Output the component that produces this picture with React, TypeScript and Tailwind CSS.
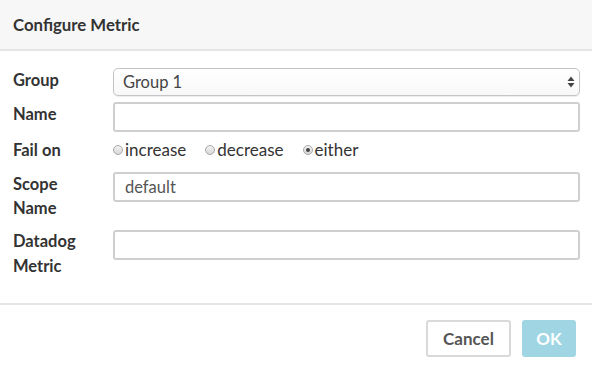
function Radio({ label, checked }: { label: string; checked?: boolean }) {
	return (
		<label className="flex items-center">
			<span className="w-[10px] h-[10px] rounded-full border border-[#a8a8a8] bg-gradient-to-b from-[#f4f4f4] to-[#d6d6d6] flex items-center justify-center mr-[2px]">
				{checked && <span className="w-[4px] h-[4px] rounded-full bg-[#444]" />}
			</span>
			<span>{label}</span>
		</label>
	);
}

function Field({ label, children }: { label: React.ReactNode; children: React.ReactNode }) {
	return (
		<div className="flex items-start">
			<div className="w-[100px] font-bold text-[#333] leading-[24px] text-[16.5px]">{label}</div>
			<div className="flex-1">{children}</div>
		</div>
	);
}

export default function App() {
	return (
		<div
			className="w-[592px] h-[366px] bg-white text-[16.5px] text-[#333] flex flex-col"
			style={{ fontFamily: 'Lato, "Liberation Sans", sans-serif' }}
		>
			<div className="h-[51px] bg-[#f7f7f7] border-b-2 border-[#e5e5e5] px-[13px] flex items-center">
				<span className="font-bold text-[16.8px] text-[#333] pt-[1px]">Configure Metric</span>
			</div>

			<div className="pt-[17px] pl-[13px] pr-[12px] pb-[24px] flex flex-col">
				<Field label="Group">
					<div className="h-[28px] rounded-[5px] border border-[#c4c4c4] bg-gradient-to-b from-white to-[#f8f8f8] shadow-[0_1px_1px_rgba(0,0,0,0.08)] flex items-center justify-between pl-[9px] pr-[4px] text-[#444]">
						<span>Group 1</span>
						<svg width="8" height="12" viewBox="0 0 8 12">
							<path d="M4 0.5 L7.5 5 L0.5 5 Z" fill="#444" />
							<path d="M4 11.5 L7.5 7 L0.5 7 Z" fill="#444" />
						</svg>
					</div>
				</Field>

				<div className="mt-[6px]">
					<Field label="Name">
						<div className="h-[30px] rounded-[3px] border-2 border-[#cfcfcf]" />
					</Field>
				</div>

				<div className="mt-[6px]">
					<Field label="Fail on">
						<div className="flex items-center gap-[19px] leading-[24px] text-[17px] text-[#333]">
							<Radio label="increase" />
							<Radio label="decrease" />
							<Radio label="either" checked />
						</div>
					</Field>
				</div>

				<div className="mt-[10px]">
					<Field label={<>Scope<br />Name</>}>
						<div className="h-[30px] rounded-[3px] border-2 border-[#cfcfcf] flex items-center px-[10px] text-[#555]">
							default
						</div>
					</Field>
				</div>

				<div className="mt-[10px]">
					<Field label={<div className="-mt-[1px] leading-[25px]">Datadog<br />Metric</div>}>
						<div className="h-[30px] rounded-[3px] border-2 border-[#cfcfcf]" />
					</Field>
				</div>
			</div>

			<div className="border-t-2 border-[#e5e5e5] flex justify-end gap-[11px] pt-[15px] pr-[16px]">
				<button className="w-[85px] h-[37px] rounded-[3px] border-2 border-[#d9d9d9] bg-white font-bold text-[17px] text-[#555]">
					Cancel
				</button>
				<button className="w-[54px] h-[37px] rounded-[3px] bg-[#a0d6e4] font-bold text-[17px] text-white">
					OK
				</button>
			</div>
		</div>
	);
}
